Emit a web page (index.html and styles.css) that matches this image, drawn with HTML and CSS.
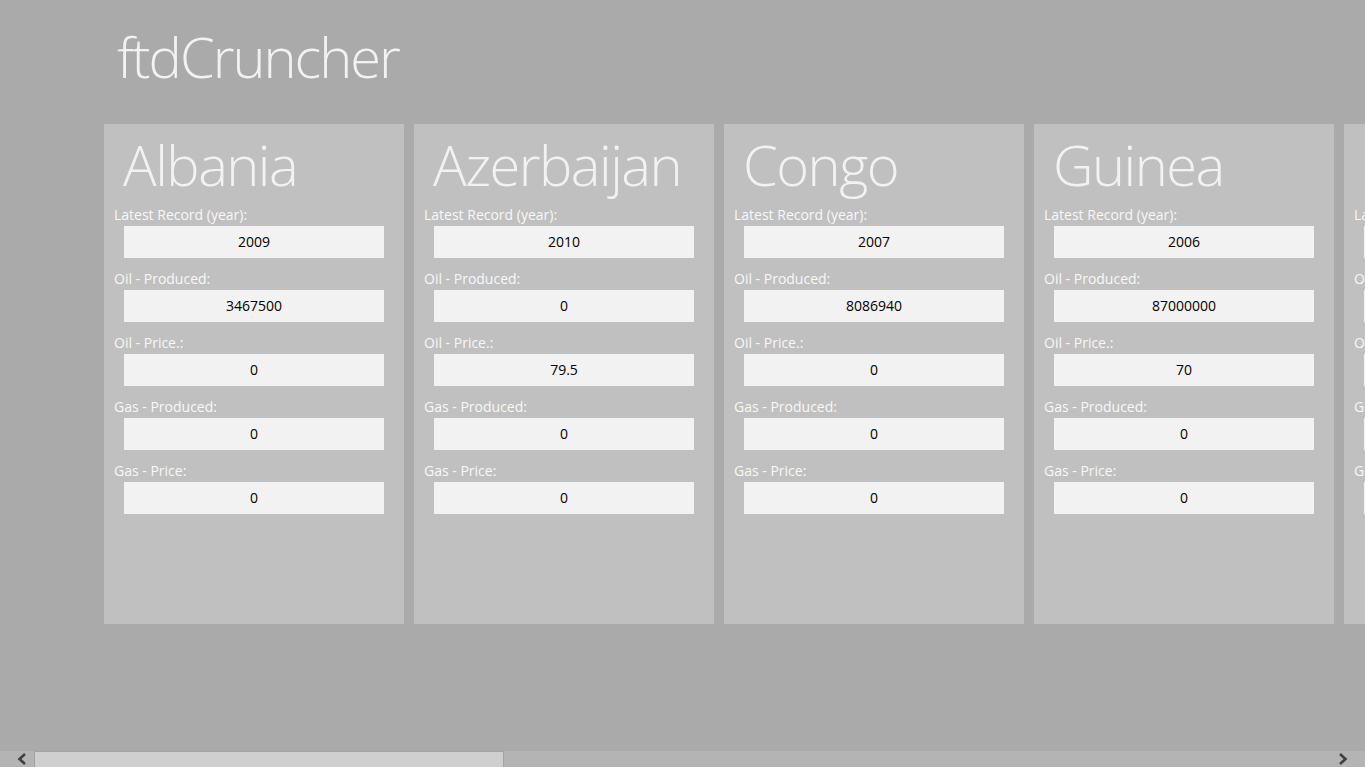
FILE: index.html
```html
<!DOCTYPE html>
<html>

<head>
    <meta charset="utf-8" />
    <title>ftdCruncher</title>
    <link rel="stylesheet" href="styles.css">
</head>

<body>
    <div id="app">
        <header class="page-header">
            <h1 class="app-title">ftdCruncher</h1>
        </header>
        <div class="cards">
            <div class="card">
                <h2 class="country">Albania</h2>
                <span class="label">Latest Record (year):</span>
                <div class="field">2009</div>
                <span class="label">Oil - Produced:</span>
                <div class="field">3467500</div>
                <span class="label">Oil - Price.:</span>
                <div class="field">0</div>
                <span class="label">Gas - Produced:</span>
                <div class="field">0</div>
                <span class="label">Gas - Price:</span>
                <div class="field">0</div>
            </div>
            <div class="card">
                <h2 class="country">Azerbaijan</h2>
                <span class="label">Latest Record (year):</span>
                <div class="field">2010</div>
                <span class="label">Oil - Produced:</span>
                <div class="field">0</div>
                <span class="label">Oil - Price.:</span>
                <div class="field">79.5</div>
                <span class="label">Gas - Produced:</span>
                <div class="field">0</div>
                <span class="label">Gas - Price:</span>
                <div class="field">0</div>
            </div>
            <div class="card">
                <h2 class="country">Congo</h2>
                <span class="label">Latest Record (year):</span>
                <div class="field">2007</div>
                <span class="label">Oil - Produced:</span>
                <div class="field">8086940</div>
                <span class="label">Oil - Price.:</span>
                <div class="field">0</div>
                <span class="label">Gas - Produced:</span>
                <div class="field">0</div>
                <span class="label">Gas - Price:</span>
                <div class="field">0</div>
            </div>
            <div class="card">
                <h2 class="country">Guinea</h2>
                <span class="label">Latest Record (year):</span>
                <div class="field">2006</div>
                <span class="label">Oil - Produced:</span>
                <div class="field">87000000</div>
                <span class="label">Oil - Price.:</span>
                <div class="field">70</div>
                <span class="label">Gas - Produced:</span>
                <div class="field">0</div>
                <span class="label">Gas - Price:</span>
                <div class="field">0</div>
            </div>
            <div class="card">
                <h2 class="country">&nbsp;</h2>
                <span class="label">Latest Record (year):</span>
                <div class="field">&nbsp;</div>
                <span class="label">Oil - Produced:</span>
                <div class="field">&nbsp;</div>
                <span class="label">Oil - Price.:</span>
                <div class="field">&nbsp;</div>
                <span class="label">Gas - Produced:</span>
                <div class="field">&nbsp;</div>
                <span class="label">Gas - Price:</span>
                <div class="field">&nbsp;</div>
            </div>
        </div>
        <div class="scrollbar">
            <span class="arrow">
                <svg width="34" height="16" viewBox="0 0 34 16"><path d="M25 3 L19.5 8 L25 13" fill="none" stroke="#404040" stroke-width="2.6"/></svg>
            </span>
            <div class="track">
                <div class="thumb"></div>
            </div>
            <span class="arrow">
                <svg width="34" height="16" viewBox="0 0 34 16"><path d="M9 3 L14.5 8 L9 13" fill="none" stroke="#404040" stroke-width="2.6"/></svg>
            </span>
        </div>
    </div>
</body>

</html>
```

FILE: styles.css
```css
body {
    padding: 0;
    margin: 0;
    font-family: "Open Sans", "Noto Sans", sans-serif;
}

#app {
    background-color: #aaaaaa;
    height: 100vh;
    display: flex;
    flex-direction: column;
    overflow: hidden;
}

.page-header {
    height: 124px;
    padding-left: 117px;
    box-sizing: border-box;
}

.app-title {
    margin: 0;
    padding-top: 16px;
    font-size: 56px;
    font-weight: 300;
    line-height: 80px;
    color: #f2f2f2;
    letter-spacing: -2px;
}

.cards {
    display: flex;
    gap: 10px;
    padding-left: 104px;
    flex: 1;
}

.card {
    flex: 0 0 300px;
    height: 500px;
    background-color: #c0c0c0;
    padding: 0 10px;
    box-sizing: border-box;
    display: flex;
    flex-direction: column;
}

.country {
    margin: 0;
    padding-left: 9px;
    font-size: 56px;
    font-weight: 300;
    line-height: 80px;
    height: 81px;
    color: #f2f2f2;
    letter-spacing: -1.5px;
}

.label {
    display: block;
    font-size: 14px;
    line-height: 20px;
    color: #f8f8f8;
}

.field {
    margin: 1px 10px 11px;
    height: 32px;
    background-color: #f2f2f2;
    color: #000;
    font-size: 14px;
    line-height: 32px;
    text-align: center;
}

.scrollbar {
    height: 16px;
    display: flex;
    align-items: stretch;
    background-color: #b4b4b4;
}

.arrow {
    width: 34px;
    display: flex;
}

.track {
    flex: 1;
}

.thumb {
    width: 470px;
    height: 16px;
    background-color: #cfcfcf;
    border: 1px solid #a3a3a3;
    border-bottom: 0;
    box-sizing: border-box;
}
```
